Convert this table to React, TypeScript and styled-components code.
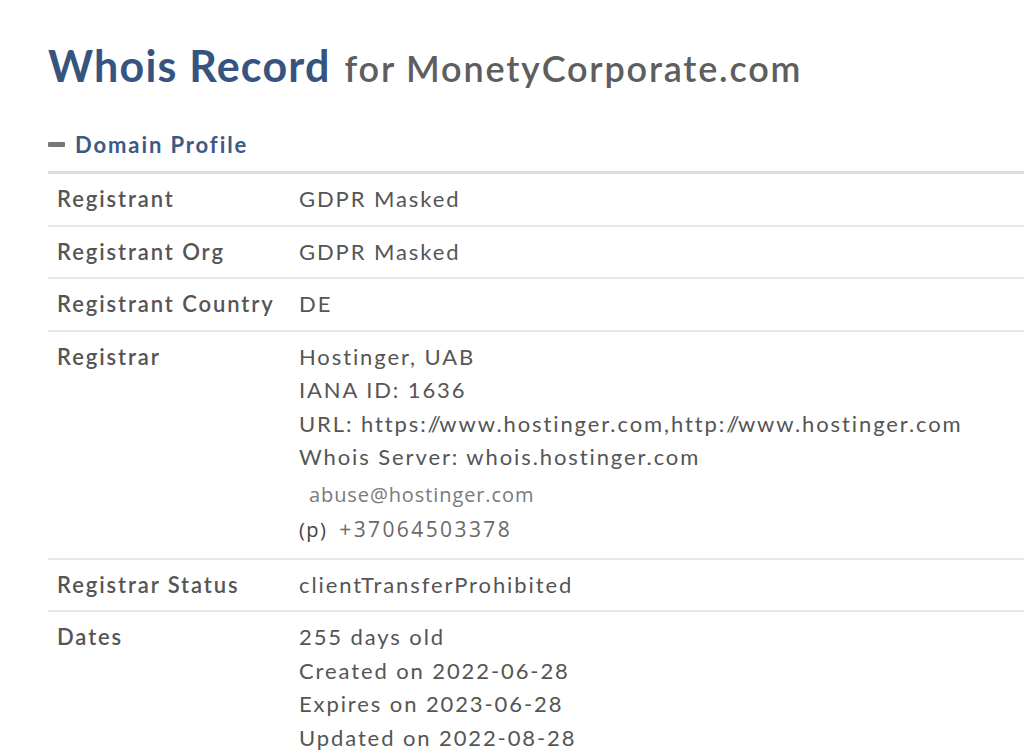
import React from "react";
import styled, { createGlobalStyle } from "styled-components";

const Global = createGlobalStyle`
  html, body { margin: 0; padding: 0; background: #ffffff; }
  body { font-family: Lato, "Open Sans", sans-serif; overflow: hidden; }
`;

const Page = styled.div`
  padding: 40px 0 0 48px;
  width: 1100px;
`;

const Title = styled.h1`
  margin: 0;
  font-size: 43px;
  line-height: 52px;
  font-weight: 700;
  color: #36547e;
  letter-spacing: 1.2px;
  white-space: nowrap;
`;

const TitleSub = styled.span`
  font-size: 36px;
  color: #5e5e5e;
  font-weight: 600;
  letter-spacing: 1.8px;
  margin-left: 14px;
`;

const SectionHead = styled.div`
  display: flex;
  align-items: center;
  gap: 10px;
  margin-top: 32px;
  height: 36px;
  font-size: 22px;
  font-weight: 700;
  color: #3b5a85;
  letter-spacing: 1.9px;
`;

const Dash = styled.span`
  width: 17px;
  height: 5px;
  border-radius: 1px;
  background: #777;
`;

const Table = styled.div`
  margin-top: 9px;
  border-top: 3px solid #dddddd;
`;

const Row = styled.div`
  display: grid;
  grid-template-columns: 242px 1fr;
  padding: 8px 0 9px 9px;
  border-bottom: 2px solid #e8e8e8;
  font-size: 22px;
  line-height: 33.5px;
  letter-spacing: 1.9px;
`;

const Label = styled.div`
  font-weight: 600;
  color: #555555;
`;

const Value = styled.div`
  color: #555555;
  display: flex;
  flex-direction: column;
  white-space: nowrap;
`;

const Slashes = styled.span`
  letter-spacing: -1.6px;
`;

const Contact = styled.div`
  font-family: "Open Sans", "Noto Sans", sans-serif;
  line-height: 35px;
`;

const Email = styled(Contact)`
  margin-top: 3px;
  padding-left: 10px;
  font-size: 20px;
  letter-spacing: 0.9px;
  color: #7a7a7a;
`;

const Phone = styled(Contact)`
  display: flex;
  align-items: baseline;
  gap: 12px;
  margin-bottom: 2px;
  color: #6a6a6a;
  font-size: 21px;
  letter-spacing: 2.4px;
`;

const PhoneTag = styled.span`
  color: #444444;
  font-size: 20px;
  letter-spacing: 1.4px;
`;

const withSlashes = (v: string) => {
  const parts = v.split("//");
  return parts.map((p, i) => (
    <React.Fragment key={i}>
      {i > 0 && <Slashes>//</Slashes>}
      {p}
    </React.Fragment>
  ));
};

const rows: { label: string; values: string[]; contact?: boolean }[] = [
  { label: "Registrant", values: ["GDPR Masked"] },
  { label: "Registrant Org", values: ["GDPR Masked"] },
  { label: "Registrant Country", values: ["DE"] },
  {
    label: "Registrar",
    values: [
      "Hostinger, UAB",
      "IANA ID: 1636",
      "URL: https://www.hostinger.com,http://www.hostinger.com",
      "Whois Server: whois.hostinger.com",
    ],
    contact: true,
  },
  { label: "Registrar Status", values: ["clientTransferProhibited"] },
  {
    label: "Dates",
    values: [
      "255 days old",
      "Created on 2022-06-28",
      "Expires on 2023-06-28",
      "Updated on 2022-08-28",
    ],
  },
];

export default function App() {
  return (
    <>
      <Global />
      <Page>
        <Title>
          Whois Record<TitleSub>for MonetyCorporate.com</TitleSub>
        </Title>
        <SectionHead>
          <Dash />
          Domain Profile
        </SectionHead>
        <Table>
          {rows.map((r) => (
            <Row key={r.label}>
              <Label>{r.label}</Label>
              <Value>
                {r.values.map((v) => (
                  <span key={v}>{withSlashes(v)}</span>
                ))}
                {r.contact && (
                  <>
                    <Email>abuse@hostinger.com</Email>
                    <Phone>
                      <PhoneTag>(p)</PhoneTag>+37064503378
                    </Phone>
                  </>
                )}
              </Value>
            </Row>
          ))}
        </Table>
      </Page>
    </>
  );
}
